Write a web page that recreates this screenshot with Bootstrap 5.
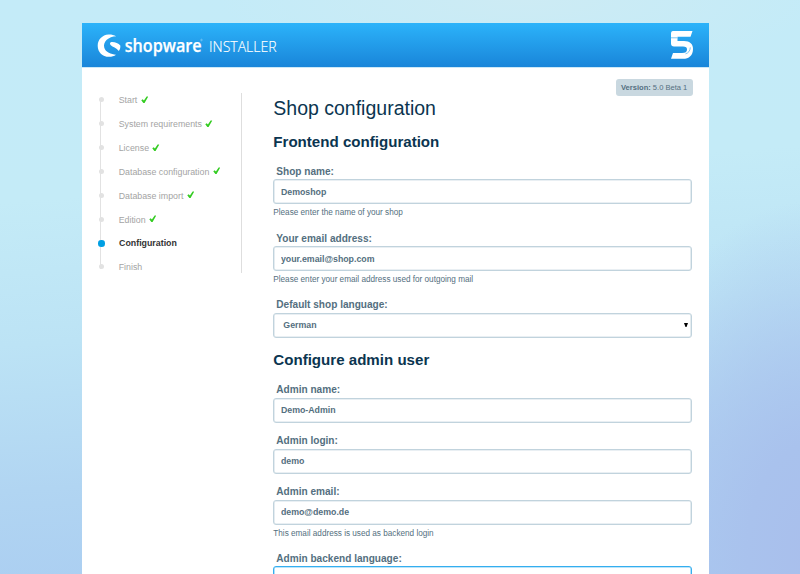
<!DOCTYPE html>
<html lang="en">
<head>
<meta charset="utf-8">
<meta name="viewport" content="width=device-width, initial-scale=1">
<title>Shopware Installer</title>
<link href="https://cdn.jsdelivr.net/npm/bootstrap@5.3.0/dist/css/bootstrap.min.css" rel="stylesheet">
<style>
body{font-family:"Liberation Sans",Arial,sans-serif;height:574px;color:#546f80;
background:radial-gradient(ellipse 200px 350px at 101% 96%,#a9bfec 0,#a9c2ed 30%,rgba(171,208,241,0) 100%),radial-gradient(ellipse 300px 70px at 65% 0,#cdebf4,rgba(205,235,244,0)),linear-gradient(176deg,#c4ebf8 0,#c4ebf7 32%,#bce3f5 55%,#b1d5f2 78%,#a9ccf1 100%)}
.installer{width:626.6px;margin-left:82.3px;margin-top:23px;height:551px}
.brandbar{height:44.5px;background:linear-gradient(#2cb3fa,#1985d9);border-bottom:1px solid #cce8f7}
.steps{width:144px;height:180px;margin:25px 0 0 16px;border-right:1px solid #dedede;font-size:8.82px;line-height:14px;color:#a4a4a4}
.steps li{height:23.93px;display:flex;align-items:center;position:relative;padding-left:21.5px}
.steps li:nth-child(n+7){height:23.5px}
.steps ul{margin-top:-4.5px}
.dot-col{width:6px;display:flex;justify-content:center;margin-left:-21.5px;margin-right:14.4px}
.dot-col::before{content:"";width:5px;height:5px;border-radius:50%;background:#e2e2e2;position:relative;z-index:1}
.steps li::before{content:"";position:absolute;left:2px;top:0;bottom:0;width:1px;background:#e2e2e2}
.steps li:first-child::before{top:10px}
.steps li:last-child::before{bottom:10px}
.steps li.now{color:#333;font-weight:700}
.now .dot-col::before{width:6.5px;height:6.5px;flex:none;background:#009fe3}
.now .dot-col{margin-right:14.8px}
.tick{width:7.5px;height:7.5px;margin-left:3.3px;margin-top:-1px}
.formcol{width:419px;margin-left:31px}
.version{height:17px;margin-top:11px;background:#c9d8e0;border-radius:3px;font-size:7.55px;line-height:17px;padding:0 5px;width:77px;white-space:nowrap;position:relative;left:.7px}
h1{font-size:19.5px;line-height:24px;height:33.5px;color:#0b3550;font-weight:400;margin:0}
h2{font-size:15.1px;line-height:25px;height:33.75px;color:#0b3550;font-weight:700;margin:0}
.fieldrow{height:51px}
.fieldrow.hinted{height:66.75px}
.fieldrow label{display:block;font-size:10.08px;font-weight:700;line-height:17px;height:16.7px;padding-left:3px}
.fieldrow .form-control,.fieldrow .form-select{height:25px;min-height:0;padding:0 6.6px;font-size:8.8px;line-height:22px;font-weight:700;color:#546f80;border:1px solid #c1d3dd;box-shadow:inset 0 0 0 .6px #d3e0e7;border-radius:3px;background-color:#fff}
.fieldrow .form-select{padding-left:9px;background-image:none}
.hint{font-size:8.18px;line-height:18.4px}
.selwrap{display:grid}
.selwrap>*{grid-area:1/1}
.selwrap svg{justify-self:end;align-self:center;margin-right:4px;width:4px;height:4px;z-index:1}
.fieldrow .active-field{border-color:#35aeef;box-shadow:inset 0 0 0 .6px #7accf6}
</style>
<script src="https://cdn.jsdelivr.net/npm/bootstrap@5.3.0/dist/js/bootstrap.bundle.min.js"></script>
</head>
<body class="overflow-hidden d-flex flex-column">
<svg width="0" height="0" class="position-absolute"><symbol id="tick" viewBox="0 0 8 8"><path d="M.3 4.6 1.8 3.5 3.1 4.9 6 .6 7.8.6 3.8 7.4H2.5Z" fill="#34cc22"/></symbol></svg>
<main class="installer bg-white">
<header class="brandbar d-flex justify-content-between">
<svg width="210" height="44" viewBox="0 0 210 44" fill="#fff">
<path d="M34.2 13.3C31.8 12 29.4 11.5 26.5 11.6C20.2 12 15.7 16.8 15.7 22.7C15.7 29 20.3 33.8 27 33.8C29.8 33.8 32.2 33 34 31.7C29.3 31.5 23.5 29.3 22.3 24.8C20.7 18.6 26.6 13.6 34.2 13.3Z"/>
<path d="M38.3 22.4C36.5 20.2 32.5 18.8 29.4 19.1C27.7 19.4 27.6 21.2 28.8 22.3C30.6 24 34.5 25 36.8 28C38 26.4 38.6 24.4 38.3 22.4Z"/>
<text x="42.7" y="28.6" font-family="Open Sans,sans-serif" font-weight="600" font-size="18.6" textLength="77" lengthAdjust="spacingAndGlyphs" stroke="#fff" stroke-width=".25">shopware</text>
<circle cx="119.5" cy="17" r=".8" fill="none" stroke="#bfe5fb" stroke-width=".4"/>
<text x="127" y="28.9" font-family="Open Sans,sans-serif" font-weight="300" font-size="13.8" textLength="67.5" lengthAdjust="spacingAndGlyphs" stroke="#fff" stroke-width=".15">INSTALLER</text>
</svg>
<svg width="40" height="44" viewBox="669 23 40 44" fill="#fff">
<path d="M673 31H692.5L690.5 36.8H677.5V41H684C690 41 693 44 693 49C693 55.5 689 58.8 683 58.8H671L673 53H682C685.5 53 687 51.7 687 49.4C687 47.3 685.8 46.5 683 46.5H674C672 46.5 671 45.5 671 43.5V34C671 32 671.5 31 673 31Z"/>
<path d="M671 37.8h6.3M685.5 53.8C688.5 53 690 51 690.3 47.4" stroke="#249fea" stroke-width=".6" fill="none"/>
</svg>
</header>
<div class="d-flex align-items-start">
<nav class="steps flex-shrink-0"><ul class="list-unstyled mb-0">
<li><span class="dot-col"></span>Start<svg class="tick"><use href="#tick"/></svg></li>
<li><span class="dot-col"></span>System requirements<svg class="tick"><use href="#tick"/></svg></li>
<li><span class="dot-col"></span>License<svg class="tick"><use href="#tick"/></svg></li>
<li><span class="dot-col"></span>Database configuration<svg class="tick"><use href="#tick"/></svg></li>
<li><span class="dot-col"></span>Database import<svg class="tick"><use href="#tick"/></svg></li>
<li><span class="dot-col"></span>Edition<svg class="tick"><use href="#tick"/></svg></li>
<li class="now"><span class="dot-col"></span>Configuration</li>
<li><span class="dot-col"></span>Finish</li>
</ul></nav>
<section class="formcol flex-shrink-0">
<div class="version ms-auto"><b>Version:</b> 5.0 Beta 1</div>
<h1>Shop configuration</h1>
<h2>Frontend configuration</h2>
<div class="fieldrow hinted"><label for="shop">Shop name:</label><input id="shop" class="form-control" value="Demoshop"><div class="hint">Please enter the name of your shop</div></div>
<div class="fieldrow hinted"><label for="mail">Your email address:</label><input id="mail" class="form-control" value="your.email@shop.com"><div class="hint">Please enter your email address used for outgoing mail</div></div>
<div class="fieldrow"><label for="lang">Default shop language:</label><div class="selwrap"><select id="lang" class="form-select"><option>German</option></select><svg viewBox="0 0 4 4"><path d="M0 0H4L2.5 4H1.5Z"/></svg></div></div>
<h2>Configure admin user</h2>
<div class="fieldrow"><label for="name">Admin name:</label><input id="name" class="form-control" value="Demo-Admin"></div>
<div class="fieldrow"><label for="login">Admin login:</label><input id="login" class="form-control" value="demo"></div>
<div class="fieldrow hinted"><label for="amail">Admin email:</label><input id="amail" class="form-control" value="demo@demo.de"><div class="hint">This email address is used as backend login</div></div>
<div class="fieldrow"><label for="alang">Admin backend language:</label><select id="alang" class="form-select active-field"><option>German</option></select></div>
</section>
</div>
</main>
</body>
</html>
